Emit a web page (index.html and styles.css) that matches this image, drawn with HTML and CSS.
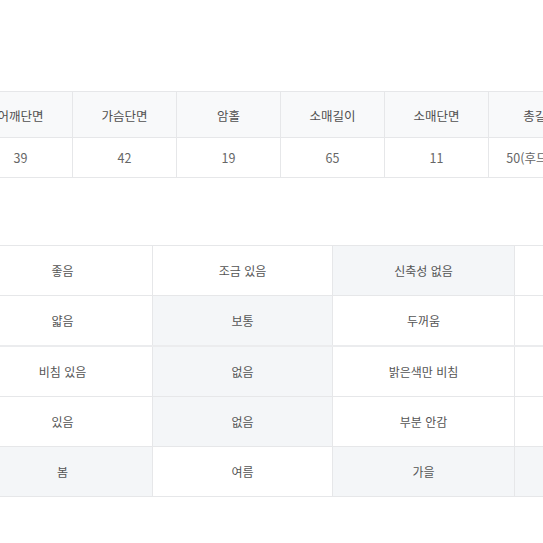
FILE: index.html
```html
<!DOCTYPE html>
<html lang="ko">
<head>
<meta charset="utf-8">
<link rel="stylesheet" href="styles.css">
</head>
<body>
<div class="page">
  <table class="size">
    <colgroup><col><col><col><col><col><col></colgroup>
    <tr class="head">
      <td>어깨단면</td><td>가슴단면</td><td>암홀</td><td>소매길이</td><td>소매단면</td><td>총길이</td>
    </tr>
    <tr class="data">
      <td>39</td><td>42</td><td>19</td><td>65</td><td>11</td><td>50(후드포함)</td>
    </tr>
  </table>

  <table class="info">
    <colgroup><col class="c1"><col class="c2"><col class="c3"><col class="c4"></colgroup>
    <tr><td>좋음</td><td>조금 있음</td><td class="on">신축성 없음</td><td></td></tr>
    <tr><td>얇음</td><td class="on">보통</td><td>두꺼움</td><td></td></tr>
    <tr class="thick"><td>비침 있음</td><td class="on">없음</td><td>밝은색만 비침</td><td></td></tr>
    <tr><td>있음</td><td class="on">없음</td><td>부분 안감</td><td></td></tr>
    <tr><td class="on">봄</td><td>여름</td><td class="on">가을</td><td class="on">겨울</td></tr>
  </table>
</div>
</body>
</html>
```

FILE: styles.css
```css
html, body {
  margin: 0;
  padding: 0;
  background: #ffffff;
}
body {
  width: 543px;
  height: 543px;
  overflow: hidden;
  font-family: "Noto Sans CJK KR", "Noto Sans", sans-serif;
  color: #555555;
}
.page {
  display: flex;
  flex-direction: column;
  padding-top: 91px;
}
table {
  border-collapse: collapse;
  table-layout: fixed;
}
td {
  border: 1px solid #e6e7e9;
  text-align: center;
  vertical-align: middle;
  padding: 0;
  white-space: nowrap;
  overflow: visible;
}
.size {
  width: 624px;
  margin-left: -32px;
}
.size col { width: 104px; }
.size td {
  font-size: 12.5px;
}
.size .head td {
  height: 43px;
  background: #f8f9fa;
  color: #505050;
  padding-top: 2px;
}
.size .data td {
  height: 39px;
  background: #ffffff;
  color: #666666;
}
.info {
  width: 722px;
  margin-left: -28px;
  margin-top: 67px;
}
.info .c1 { width: 180px; }
.info .c2 { width: 180px; }
.info .c3 { width: 182px; }
.info .c4 { width: 180px; }
.info td {
  height: 49px;
  font-size: 12px;
  color: #555555;
  background: #ffffff;
}
.info td.on {
  background: #f4f6f8;
}
.info tr.thick td {
  border-top: 2px solid #ebecee;
}
```
